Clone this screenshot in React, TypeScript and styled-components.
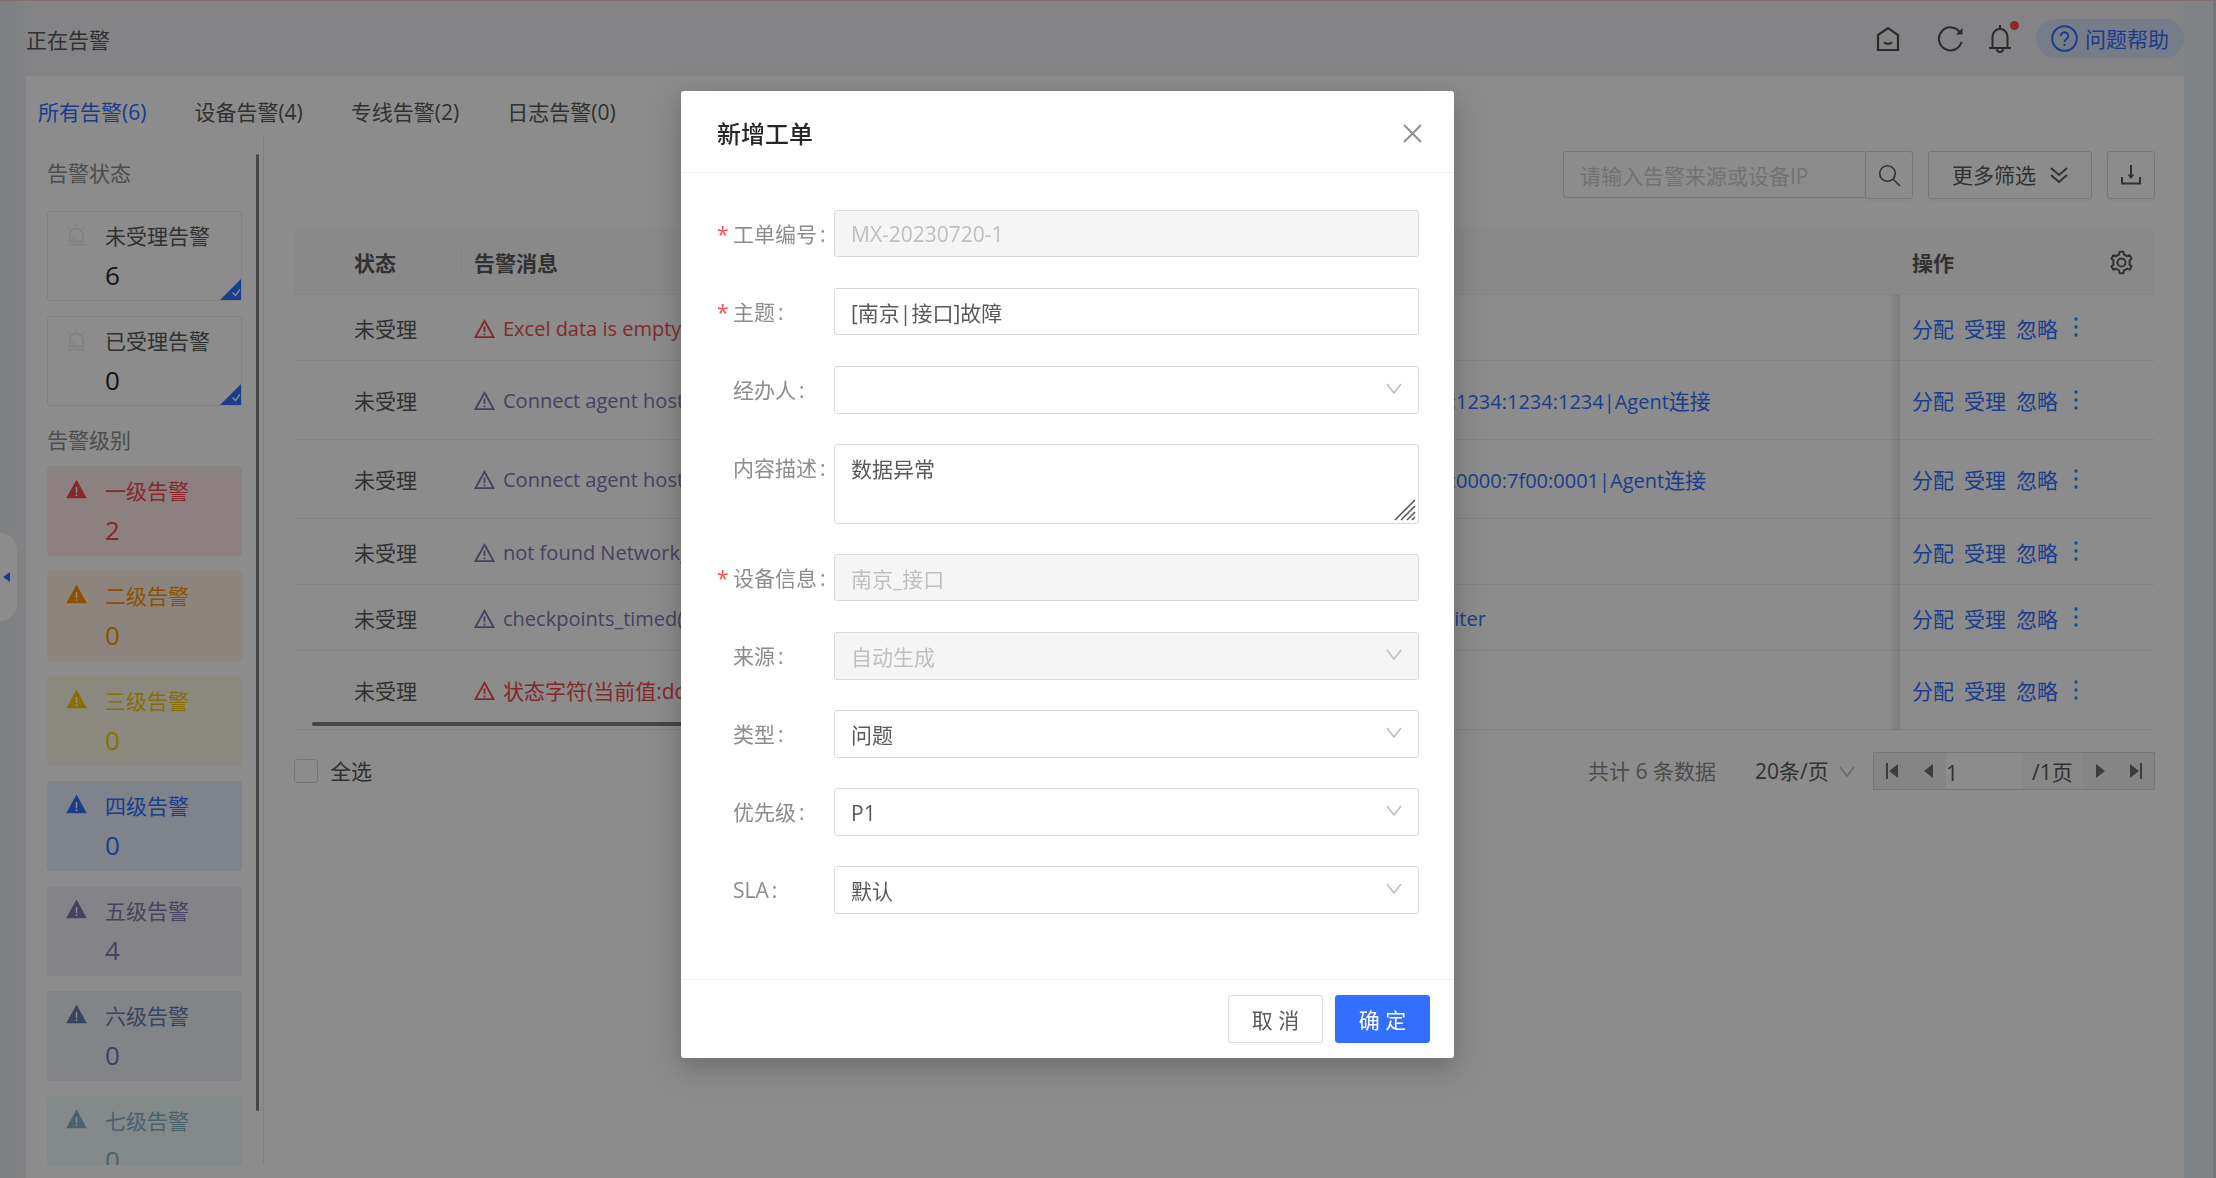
import React from "react";
import styled, { createGlobalStyle } from "styled-components";

const FONT = '"Open Sans", "Noto Sans CJK SC", sans-serif';
const BLUE = "#326fff";

const Global = createGlobalStyle`
  * { box-sizing: border-box; }
  html, body, #root { height: 100%; margin: 0; }
  body { overflow: hidden; font-family: ${FONT}; font-size: 21px; line-height: 32px; color: #595959; background: #eceef2; }
  button, input, select, textarea { font: inherit; color: inherit; margin: 0; }
  button { padding: 0; cursor: pointer; }
  a { color: ${BLUE}; text-decoration: none; }
  svg { display: block; flex: none; }
`;

const Page = styled.div`
  height: 100vh;
  display: flex;
  flex-direction: column;
  padding: 0 29px 0 26px;
  background: linear-gradient(90deg, #e6e8ed, #f0f1f4 40px, #f0f1f4 calc(100% - 40px), #eaeef2 calc(100% - 28px));
  border-top: 1px solid #f5c9c9;
  border-right: 3px solid #d8d9dc;
`;

const TopBar = styled.header`
  height: 75px;
  flex: none;
  display: flex;
  align-items: center;
  justify-content: space-between;
`;
const PageTitle = styled.h1`
  margin: 0;
  padding-top: 2px;
  font-size: 21px;
  font-weight: 400;
`;
const TopTools = styled.div`
  display: flex;
  align-items: center;
  color: #4d4d4d;
`;
const IconButton = styled.button<{ $after: number }>`
  position: relative;
  display: flex;
  border: 0;
  background: none;
  margin-right: ${(p) => p.$after}px;
`;
const Dot = styled.span`
  position: absolute;
  top: -4px;
  right: -8px;
  width: 9px;
  height: 9px;
  border-radius: 50%;
  background: #ff4d4f;
`;
const Help = styled.a`
  display: flex;
  align-items: center;
  gap: 7px;
  height: 39px;
  padding: 0 15px;
  border-radius: 20px;
  background: #d9e2fa;
`;

const Panel = styled.main`
  flex: 1;
  min-height: 0;
  display: flex;
  flex-direction: column;
  background: #fff;
  padding-bottom: 13px;
`;
const Tabs = styled.nav`
  flex: none;
  display: flex;
  gap: 48px;
  height: 60px;
  padding: 20px 12px 0;
`;
const Tab = styled.a<{ $on?: boolean }>`
  color: ${(p) => (p.$on ? BLUE : "#595959")};
  white-space: nowrap;
`;
const Columns = styled.div`
  flex: 1;
  min-height: 0;
  display: flex;
`;

const Side = styled.aside`
  flex: none;
  width: 238px;
  display: flex;
  justify-content: space-between;
  border-right: 1px solid #ebebeb;
`;
const SideScroll = styled.div`
  width: 216px;
  overflow: hidden;
  padding: 18px 0 0 21px;
`;
const SideThumb = styled.div`
  width: 3px;
  height: 957px;
  margin: 18px 4px 0 0;
  border-radius: 2px;
  background: #808080;
`;
const SideTitle = styled.h2`
  margin: 0;
  height: 57px;
  padding-top: 3px;
  font-size: 21px;
  line-height: 32px;
  font-weight: 400;
  color: #8c8c8c;
`;
const LevelTitle = styled(SideTitle)`
  height: 60px;
  padding-top: 18px;
`;
const Cards = styled.div`
  display: flex;
  flex-direction: column;
  gap: 15px;
`;
const Card = styled.button<{ $fg: string; $bg: string; $outlined?: boolean }>`
  position: relative;
  flex: none;
  display: flex;
  height: 90px;
  width: 195px;
  padding: 0 0 0 18px;
  border: 1px solid ${(p) => (p.$outlined ? "#ececec" : p.$bg)};
  border-radius: 3px;
  background: ${(p) => p.$bg};
  color: ${(p) => p.$fg};
  text-align: left;
`;
const CardIcon = styled.span`
  width: 39px;
  padding-top: 12px;
`;
const CardText = styled.span`
  display: flex;
  flex-direction: column;
  padding-top: 8px;
`;
const CardCount = styled.span<{ $dark?: boolean }>`
  font-size: 26px;
  line-height: 46px;
  color: ${(p) => (p.$dark ? "#262626" : "inherit")};
`;
const Corner = styled.span`
  position: absolute;
  right: 0;
  bottom: 0;
`;

const Main = styled.section`
  flex: 1;
  min-width: 0;
  padding: 15px 29px 0 30px;
`;
const Filters = styled.div`
  display: flex;
  justify-content: flex-end;
  gap: 15px;
  margin-bottom: 30px;
`;
const SearchBox = styled.form`
  display: flex;
  width: 350px;
`;
const SearchInput = styled.input`
  flex: 1;
  min-width: 0;
  height: 47px;
  padding: 3px 16px 0;
  border: 1px solid #d9d9d9;
  border-right: 0;
  border-radius: 3px 0 0 3px;
  &::placeholder { color: #d0d0d0; opacity: 1; }
`;
const ToolButton = styled.button<{ $wide?: boolean }>`
  display: flex;
  align-items: center;
  justify-content: center;
  gap: 14px;
  width: ${(p) => (p.$wide ? 164 : 48)}px;
  height: 48px;
  border: 1px solid #d9d9d9;
  border-radius: 3px;
  background: #fff;
  box-shadow: 0 3px 0 rgba(0, 0, 0, 0.02);
`;

const TableWrap = styled.div`
  position: relative;
`;
const Table = styled.table`
  width: 100%;
  table-layout: fixed;
  border-collapse: separate;
  border-spacing: 0;
`;
const Th = styled.th<{ $split?: boolean }>`
  height: 66px;
  padding: 2px 12px 0;
  text-align: left;
  font-weight: 700;
  background: #fafafa;
  border-bottom: 1px solid #f0f0f0;
  ${(p) =>
    p.$split &&
    "background: linear-gradient(#f0f0f0, #f0f0f0) right 17px / 1px 32px no-repeat #fafafa;"}
`;
const ThInner = styled.div`
  display: flex;
  align-items: center;
  justify-content: space-between;
  padding-right: 9px;
`;
const Td = styled.td<{ $tall?: boolean; $fixed?: boolean }>`
  height: ${(p) => (p.$tall ? 79 : 66)}px;
  padding: 2px 12px 0;
  border-bottom: 1px solid #f0f0f0;
  white-space: nowrap;
  overflow: ${(p) => (p.$fixed ? "visible" : "hidden")};
  ${(p) =>
    p.$fixed &&
    `
    position: relative;
    &::before {
      content: "";
      position: absolute;
      top: 0;
      bottom: -1px;
      left: -12px;
      width: 12px;
      background: linear-gradient(90deg, transparent, rgba(0, 0, 0, 0.12));
    }
  `}
`;
const Message = styled.span<{ $color: string }>`
  display: flex;
  align-items: center;
  gap: 8px;
  color: ${(p) => p.$color};
`;
const Latin = styled.span`
  font-size: 20px;
`;
const Actions = styled.div`
  display: flex;
  align-items: center;
  gap: 10px;
`;
const More = styled.button`
  display: flex;
  border: 0;
  background: none;
  padding: 0 6px 3px;
  color: #1890ff;
`;
const RowScroll = styled.div`
  position: absolute;
  left: 18px;
  bottom: 4px;
  width: 900px;
  height: 4px;
  border-radius: 2px;
  background: #808080;
`;

const Foot = styled.div`
  display: flex;
  align-items: center;
  justify-content: space-between;
  margin-top: 22px;
`;
const CheckAll = styled.label`
  display: flex;
  align-items: center;
  gap: 12px;
`;
const Checkbox = styled.input`
  appearance: none;
  width: 24px;
  height: 24px;
  border: 1px solid #d9d9d9;
  border-radius: 3px;
  background: #fff;
`;
const Paging = styled.div`
  display: flex;
  align-items: center;
`;
const Total = styled.span`
  margin-right: 39px;
  color: #8c8c8c;
`;
const SizePick = styled.span`
  position: relative;
  display: flex;
  align-items: center;
  margin-right: 18px;
  color: #bfbfbf;
`;
const SizeSelect = styled.select`
  appearance: none;
  width: 100px;
  height: 32px;
  padding: 0;
  border: 0;
  background: none;
  color: #595959;
`;
const SizeArrow = styled.span`
  position: absolute;
  right: 0;
  pointer-events: none;
`;
const Pager = styled.div`
  display: flex;
  align-items: center;
  height: 38px;
  width: 282px;
  border: 1px solid #d9d9d9;
  background: #f7f7f7;
`;
const PageButton = styled.button`
  flex: 1;
  height: 36px;
  display: flex;
  align-items: center;
  justify-content: center;
  border: 0;
  background: #f2f2f2;
  color: #707070;
`;
const PageInput = styled.input`
  width: 76px;
  height: 36px;
  padding: 3px 0 0;
  border: 0;
  background: #fff;
`;
const PageCount = styled.span`
  width: 60px;
  padding: 2px 0 0 10px;
`;

const Handle = styled.button`
  position: fixed;
  left: 0;
  top: 533px;
  width: 17px;
  height: 88px;
  display: flex;
  align-items: center;
  padding-left: 3px;
  border: 0;
  border-radius: 0 17px 17px 0;
  background: #fff;
  color: ${BLUE};
`;
const Mask = styled.div`
  position: fixed;
  inset: 0;
  display: flex;
  justify-content: center;
  align-items: flex-start;
  padding: 91px 81px 0 0;
  background: rgba(0, 0, 0, 0.45);
`;
const Dialog = styled.div`
  width: 773px;
  border-radius: 3px;
  background: #fff;
  box-shadow: 0 9px 42px 12px rgba(0, 0, 0, 0.08), 0 9px 24px rgba(0, 0, 0, 0.16);
`;
const DialogHead = styled.div`
  display: flex;
  align-items: center;
  justify-content: space-between;
  height: 82px;
  padding: 3px 32px 0 36px;
  border-bottom: 1px solid #f0f0f0;
  color: #8c8c8c;
`;
const DialogTitle = styled.h2`
  margin: 0;
  padding-top: 2px;
  font-size: 24px;
  font-weight: 500;
  color: #262626;
`;
const Form = styled.form`
  display: flex;
  flex-direction: column;
  gap: 30px;
  padding: 37px 35px 65px 36px;
`;
const Field = styled.div`
  display: flex;
  align-items: flex-start;
  min-height: 48px;
`;
const Label = styled.label<{ $required?: boolean }>`
  width: 117px;
  flex: none;
  padding: 8px 0 0 ${(p) => (p.$required ? 0 : 16)}px;
  color: #8c8c8c;
  white-space: nowrap;
`;
const Star = styled.span`
  display: inline-block;
  width: 16px;
  color: #ff4d4f;
`;
const Colon = styled.span`
  padding-left: 3px;
`;
const Control = styled.div`
  position: relative;
  flex: 1;
  min-width: 0;
  display: flex;
  color: #bfbfbf;
`;
const boxed = `
  width: 100%;
  border: 1px solid #d9d9d9;
  border-radius: 3px;
  background: #fff;
  color: #595959;
  outline: 0;
  &:disabled { background: #f5f5f5; color: #bfbfbf; opacity: 1; }
`;
const Input = styled.input`
  ${boxed}
  height: 47px;
  padding: 0 16px;
`;
const Select = styled.select`
  ${boxed}
  appearance: none;
  height: 48px;
  padding: 1px 16px 0;
`;
const Area = styled.textarea`
  ${boxed}
  height: 80px;
  padding: 8px 16px 0;
  resize: none;
`;
const Arrow = styled.span`
  position: absolute;
  right: 17px;
  top: 17px;
  pointer-events: none;
`;
const Grip = styled.span`
  position: absolute;
  right: 3px;
  bottom: 3px;
  pointer-events: none;
  color: #595959;
`;
const DialogFoot = styled.div`
  display: flex;
  justify-content: flex-end;
  gap: 12px;
  padding: 15px 24px;
  border-top: 1px solid #f0f0f0;
`;
const Button = styled.button<{ $primary?: boolean }>`
  width: 95px;
  height: 48px;
  padding-top: 1px;
  border: 1px solid ${(p) => (p.$primary ? BLUE : "#d9d9d9")};
  border-radius: 3px;
  background: ${(p) => (p.$primary ? BLUE : "#fff")};
  color: ${(p) => (p.$primary ? "#fff" : "#595959")};
  box-shadow: 0 3px 0 rgba(0, 0, 0, 0.02);
`;

const Line = ({ w, h, box, sw = 2, children }: { w: number; h: number; box?: string; sw?: number; children: React.ReactNode }) => (
  <svg width={w} height={h} viewBox={box || `0 0 ${w} ${h}`} fill="none" stroke="currentColor" strokeWidth={sw} aria-hidden="true">
    {children}
  </svg>
);
const Chevron = () => (
  <Line w={16} h={11}><path d="M1 1l7 9 7-9" strokeWidth="1.6" /></Line>
);
const WarnSolid = () => (
  <svg width="21" height="20" viewBox="0 0 21 20" aria-hidden="true">
    <path d="M10.500.500L20.800 19.200H.200z" fill="currentColor" />
    <path d="M9.800 8h1.400v6H9.800zM9.700 15.300h1.600v1.700H9.700z" fill="#fff" />
  </svg>
);
const WarnLine = () => (
  <Line w={21} h={20} sw={1.8}>
    <path d="M10.500 1.800L19.600 18.200H1.400z" />
    <path d="M10.500 7.500v5.500M10.500 14.500v1.800" />
  </Line>
);
const Alarm = () => (
  <Line w={21} h={22} sw={1.6}>
    <path d="M4 17.500v-6.500a6.500 6.500 0 0 1 13 0v6.500zM2 20.500h17M10.500 0v2.500M2 3l2 1.500M19 3l-2 1.500M7.500 12.500v5" />
  </Line>
);
const Gear = () => (
  <Line w={25} h={25} box="0 0 24 24" sw={1.9}>
    <path
      d="M9.700 4.300L10.200 1.600h3.600l.5 2.700a8 8 0 0 1 2.900 1.700l2.600-1 1.900 3.200-2.100 1.800a8 8 0 0 1 0 3.900l2.100 1.800-1.900 3.200-2.600-1a8 8 0 0 1-2.900 1.700l-.5 2.800h-3.600l-.5-2.800A8 8 0 0 1 6.800 18l-2.600 1-1.900-3.200L4.400 14a8 8 0 0 1 0-3.900L2.300 8.200 4.200 5l2.600 1a8 8 0 0 1 2.900-1.700z"
      strokeLinejoin="round"
    />
    <circle cx="12" cy="12" r="3.900" />
  </Line>
);
const CornerCheck = () => (
  <svg width="21" height="21" viewBox="0 0 21 21" aria-hidden="true">
    <path d="M21 0v21H0z" fill={BLUE} />
    <path d="M12.500 13.500l3 3 4.500-6" fill="none" stroke="#fff" strokeWidth="1.300" />
  </svg>
);

const levels = [
  { name: "一级告警", n: 2, fg: "#f64b4f", bg: "#ffeaec" },
  { name: "二级告警", n: 0, fg: "#ff9500", bg: "#fff1e3" },
  { name: "三级告警", n: 0, fg: "#f4cd0b", bg: "#fdf9e5" },
  { name: "四级告警", n: 0, fg: BLUE, bg: "#e8eeff" },
  { name: "五级告警", n: 4, fg: "#8579ad", bg: "#f1eff6" },
  { name: "六级告警", n: 0, fg: "#667fb0", bg: "#eef1f6" },
  { name: "七级告警", n: 0, fg: "#86b4c9", bg: "#eff7f9" },
];
const RED = "#ef4b4f";
const VIOLET = "#8078b0";
const rows = [
  { msg: "Excel data is empty", color: RED, src: "", cjk: "", tall: false },
  { msg: "Connect agent host error", color: VIOLET, src: "1234:1234:1234:1234:1234:1234:1234:1234|Agent", cjk: "连接", tall: true },
  { msg: "Connect agent host error", color: VIOLET, src: "0000:0000:0000:0000:0000:0000:7f00:0001|Agent", cjk: "连接", tall: true },
  { msg: "not found Network_interface", color: VIOLET, src: "", cjk: "", tall: false },
  { msg: "checkpoints_timed(value)", color: VIOLET, src: "PostgreSQL background writer", cjk: "", tall: false },
  { msg: "状态字符(当前值:down)", color: RED, src: "", cjk: "", tall: true },
];

type FieldSpec = { id: string; label: string; value: string; kind: "input" | "select" | "area"; required?: boolean; disabled?: boolean };
const fields: FieldSpec[] = [
  { id: "no", label: "工单编号", value: "MX-20230720-1", kind: "input", required: true, disabled: true },
  { id: "subject", label: "主题", value: "[南京|接口]故障", kind: "input", required: true },
  { id: "owner", label: "经办人", value: "", kind: "select" },
  { id: "desc", label: "内容描述", value: "数据异常", kind: "area" },
  { id: "device", label: "设备信息", value: "南京_接口", kind: "input", required: true, disabled: true },
  { id: "source", label: "来源", value: "自动生成", kind: "select", disabled: true },
  { id: "type", label: "类型", value: "问题", kind: "select" },
  { id: "priority", label: "优先级", value: "P1", kind: "select" },
  { id: "sla", label: "SLA", value: "默认", kind: "select" },
];

const FormField = ({ f }: { f: FieldSpec }) => (
  <Field>
    <Label htmlFor={f.id} $required={f.required}>
      {f.required && <Star>*</Star>}
      {f.label}
      <Colon>:</Colon>
    </Label>
    <Control>
      {f.kind === "input" && <Input id={f.id} defaultValue={f.value} disabled={f.disabled} />}
      {f.kind === "area" && (
        <>
          <Area id={f.id} defaultValue={f.value} />
          <Grip>
            <Line w={22} h={22} sw={1.6}><path d="M1 21L21 1M7 21L21 7M13 21l8-8M18 21l3-3" /></Line>
          </Grip>
        </>
      )}
      {f.kind === "select" && (
        <>
          <Select id={f.id} defaultValue={f.value} disabled={f.disabled}>
            <option>{f.value}</option>
          </Select>
          <Arrow><Chevron /></Arrow>
        </>
      )}
    </Control>
  </Field>
);

export default function App() {
  return (
    <>
      <Global />
      <Page>
        <TopBar>
          <PageTitle>正在告警</PageTitle>
          <TopTools>
            <IconButton $after={37} aria-label="首页">
              <Line w={24} h={26} sw={2.2}><path d="M2 9L12 2l10 7v15H2z" /><path d="M8 16c1.500 2.500 6.500 2.500 8 0" /></Line>
            </IconButton>
            <IconButton $after={25} aria-label="刷新">
              <Line w={27} h={27} sw={2}><path d="M24.500 17A11.500 11.500 0 1 1 23 7.500" /><path d="M25.500 3v6.500H19z" fill="currentColor" stroke="none" /></Line>
            </IconButton>
            <IconButton $after={25} aria-label="通知">
              <Line w={22} h={28} sw={2}><path d="M11 0v4M3.500 22V11.500a7.500 7.500 0 0 1 15 0V22M0 23h22M8 24a3 3 0 0 0 6 0" /></Line>
              <Dot />
            </IconButton>
            <Help href="#help">
              <Line w={27} h={27} sw={2}><circle cx="13.500" cy="13.500" r="12.300" /><path d="M9.800 11a3.700 3.700 0 1 1 5.700 3c-1.300.900-2 1.500-2 3M13.500 18.800v2.200" /></Line>
              问题帮助
            </Help>
          </TopTools>
        </TopBar>
        <Panel>
          <Tabs>
            <Tab href="#all" $on>所有告警(6)</Tab>
            <Tab href="#device">设备告警(4)</Tab>
            <Tab href="#line">专线告警(2)</Tab>
            <Tab href="#log">日志告警(0)</Tab>
          </Tabs>
          <Columns>
            <Side>
              <SideScroll>
                <SideTitle>告警状态</SideTitle>
                <Cards>
                  {[["未受理告警", 6], ["已受理告警", 0]].map(([name, n]) => (
                    <Card key={name} $fg="#595959" $bg="#fff" $outlined>
                      <CardIcon style={{ color: "#ececec" }}><Alarm /></CardIcon>
                      <CardText>{name}<CardCount $dark>{n}</CardCount></CardText>
                      <Corner><CornerCheck /></Corner>
                    </Card>
                  ))}
                </Cards>
                <LevelTitle>告警级别</LevelTitle>
                <Cards>
                  {levels.map((l) => (
                    <Card key={l.name} $fg={l.fg} $bg={l.bg}>
                      <CardIcon><WarnSolid /></CardIcon>
                      <CardText>{l.name}<CardCount>{l.n}</CardCount></CardText>
                    </Card>
                  ))}
                </Cards>
              </SideScroll>
              <SideThumb />
            </Side>
            <Main>
              <Filters>
                <SearchBox>
                  <SearchInput aria-label="搜索告警" placeholder="请输入告警来源或设备IP" />
                  <ToolButton type="button" aria-label="搜索">
                    <Line w={23} h={23} sw={1.6}><circle cx="9.500" cy="9.500" r="7.800" /><path d="M15 15l7 7" /></Line>
                  </ToolButton>
                </SearchBox>
                <ToolButton $wide>
                  更多筛选
                  <Line w={18} h={18} sw={1.9}><path d="M1 2l8 7 8-7M1 9l8 7 8-7" /></Line>
                </ToolButton>
                <ToolButton aria-label="下载">
                  <Line w={22} h={22} sw={2}><path d="M2 13v6.500h18V13M11 1v11" /><path d="M7.500 10.500h7L11 15z" fill="currentColor" stroke="none" /></Line>
                </ToolButton>
              </Filters>
              <TableWrap>
                <Table>
                  <colgroup>
                    <col style={{ width: 48 }} />
                    <col style={{ width: 120 }} />
                    <col style={{ width: 727 }} />
                    <col />
                    <col style={{ width: 255 }} />
                  </colgroup>
                  <thead>
                    <tr>
                      <Th />
                      <Th $split>状态</Th>
                      <Th>告警消息</Th>
                      <Th />
                      <Th>
                        <ThInner>
                          操作
                          <Gear />
                        </ThInner>
                      </Th>
                    </tr>
                  </thead>
                  <tbody>
                    {rows.map((r, i) => (
                      <tr key={i}>
                        <Td $tall={r.tall} />
                        <Td $tall={r.tall}>未受理</Td>
                        <Td $tall={r.tall}>
                          <Message $color={r.color}><WarnLine />{i < 5 ? <Latin>{r.msg}</Latin> : r.msg}</Message>
                        </Td>
                        <Td $tall={r.tall}>{r.src && <a href="#source"><Latin>{r.src}</Latin>{r.cjk}</a>}</Td>
                        <Td $tall={r.tall} $fixed>
                          <Actions>
                            <a href="#assign">分配</a>
                            <a href="#accept">受理</a>
                            <a href="#ignore">忽略</a>
                            <More aria-label="更多">
                              <svg width="4" height="20" viewBox="0 0 4 20" fill="currentColor"><circle cx="2" cy="2" r="1.700" /><circle cx="2" cy="10" r="1.700" /><circle cx="2" cy="18" r="1.700" /></svg>
                            </More>
                          </Actions>
                        </Td>
                      </tr>
                    ))}
                  </tbody>
                </Table>
                <RowScroll />
              </TableWrap>
              <Foot>
                <CheckAll><Checkbox type="checkbox" />全选</CheckAll>
                <Paging>
                  <Total>共计 6 条数据</Total>
                  <SizePick>
                    <SizeSelect aria-label="每页条数"><option>20条/页</option></SizeSelect>
                    <SizeArrow><Chevron /></SizeArrow>
                  </SizePick>
                  <Pager>
                    <PageButton aria-label="第一页"><svg width="12" height="16" viewBox="0 0 12 16" fill="currentColor"><path d="M0 0h2v16H0zM12 1v14L3 8z" /></svg></PageButton>
                    <PageButton aria-label="上一页"><svg width="9" height="16" viewBox="0 0 9 16" fill="currentColor"><path d="M9 1v14L0 8z" /></svg></PageButton>
                    <PageInput aria-label="页码" defaultValue="1" />
                    <PageCount>/1页</PageCount>
                    <PageButton aria-label="下一页"><svg width="9" height="16" viewBox="0 0 9 16" fill="currentColor"><path d="M0 1v14l9-7z" /></svg></PageButton>
                    <PageButton aria-label="最后一页"><svg width="12" height="16" viewBox="0 0 12 16" fill="currentColor"><path d="M10 0h2v16h-2zM0 1v14l9-7z" /></svg></PageButton>
                  </Pager>
                </Paging>
              </Foot>
            </Main>
          </Columns>
        </Panel>
      </Page>
      <Handle aria-label="收起菜单"><svg width="7" height="10" viewBox="0 0 7 10" fill="currentColor"><path d="M7 0v10L0 5z" /></svg></Handle>
      <Mask>
        <Dialog role="dialog" aria-modal="true" aria-labelledby="dialog-title">
          <DialogHead>
            <DialogTitle id="dialog-title">新增工单</DialogTitle>
            <IconButton $after={0} aria-label="关闭">
              <Line w={19} h={19} sw={1.8}><path d="M1 1l17 17M18 1L1 18" /></Line>
            </IconButton>
          </DialogHead>
          <Form>
            {fields.map((f) => <FormField key={f.id} f={f} />)}
          </Form>
          <DialogFoot>
            <Button>取 消</Button>
            <Button $primary>确 定</Button>
          </DialogFoot>
        </Dialog>
      </Mask>
    </>
  );
}
